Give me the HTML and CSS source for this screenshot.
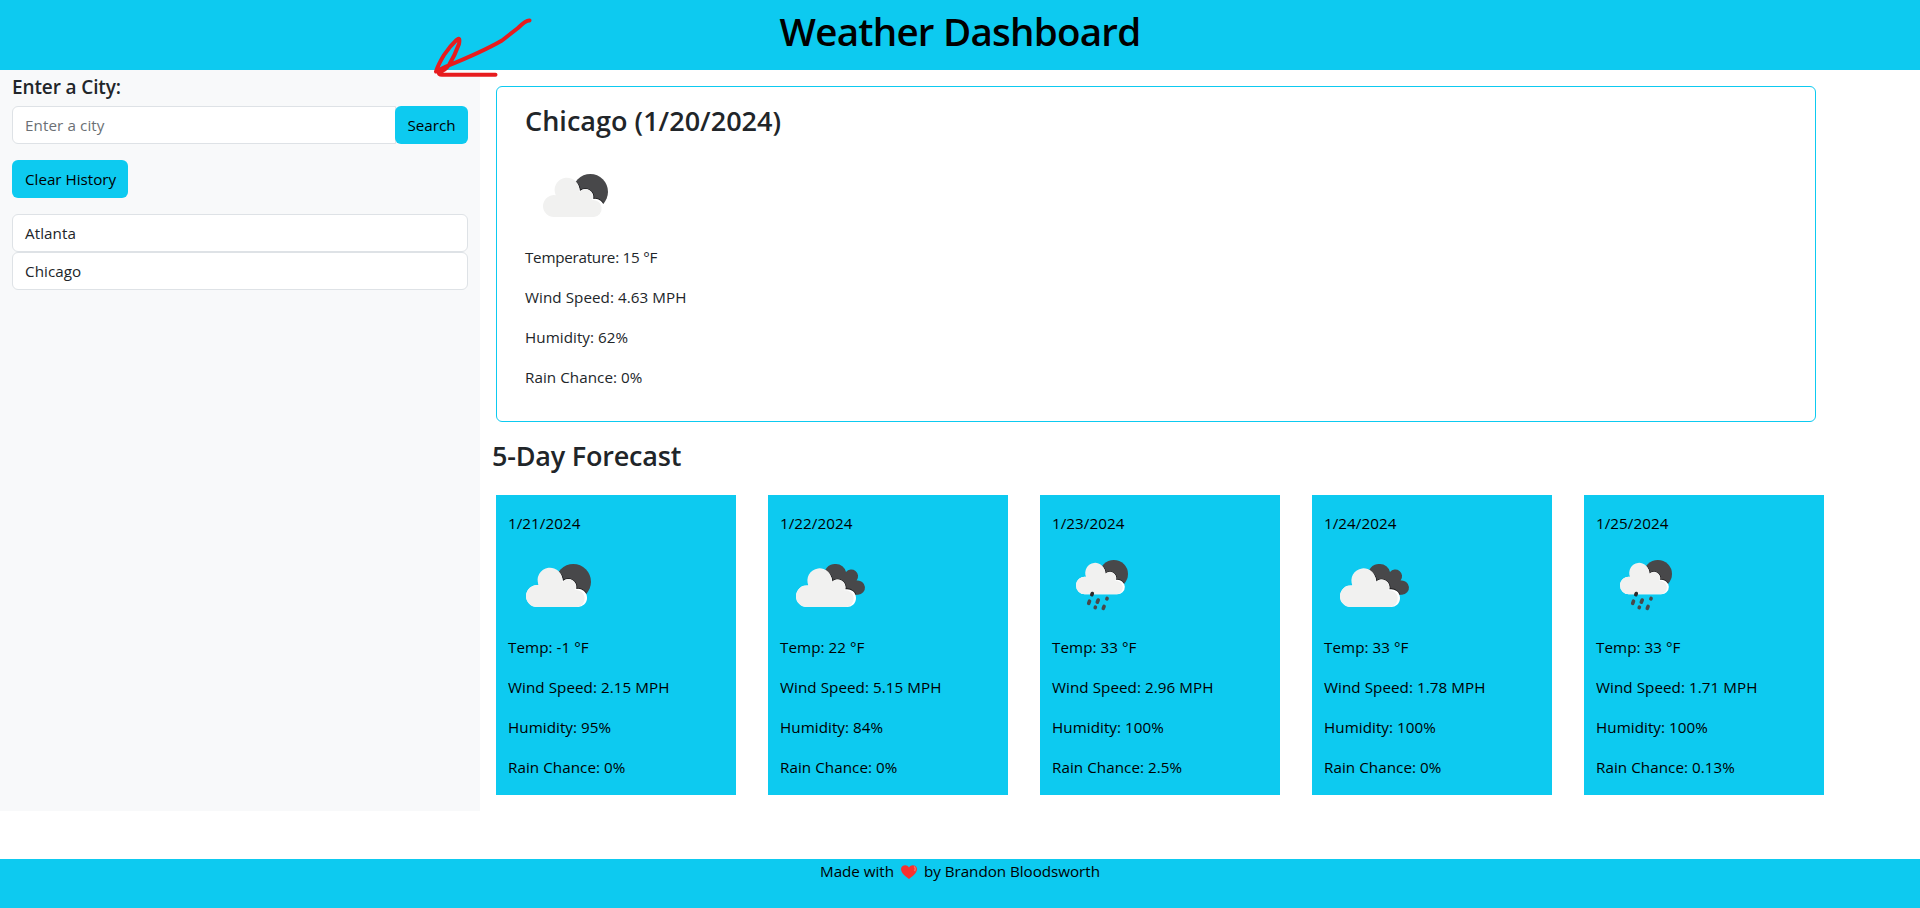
FILE: index.html
```html
<!DOCTYPE html>
<html lang="en">
<head>
<meta charset="utf-8">
<title>Weather Dashboard</title>
<link rel="stylesheet" href="styles.css">
</head>
<body>
<svg class="defs" aria-hidden="true">
  <defs>
    <path id="cloud" d="M29 71a11 11 0 0 1-11-11 11 11 0 0 1 12.7-10.8A12.4 12.4 0 1 1 55 45a8.3 8.3 0 0 1 13.3 8A9.1 9.1 0 1 1 69 71Z"/>
    <path id="cloud-face" d="M29 71a11 11 0 0 1-11-11 11 11 0 0 1 12.7-10.8A12.4 12.4 0 1 1 54.200 46.200a7.600 7.600 0 0 1 13 7.800A8.500 8.500 0 1 1 69 71Z"/>
    <clipPath id="sun-clip"><circle cx="65.3" cy="45.7" r="17.7"/></clipPath>
    <path id="back-cloud" d="M56 28a10.4 10.4 0 0 1 10 8.1A6.2 6.2 0 0 1 76.600 44.500A7.200 7.200 0 1 1 78 58.800H62L45 42A10.400 10.400 0 0 1 56 28Z"/>
    <clipPath id="back-clip"><use href="#back-cloud"/></clipPath>
    <symbol id="partly" viewBox="0 0 100 100">
      <circle cx="65.3" cy="45.7" r="17.7" fill="#48484a"/>
      <use href="#cloud" fill="none" stroke="#1c1c1e" stroke-width="1.6" clip-path="url(#sun-clip)"/>
      <use href="#cloud" fill="#fff"/>
      <use href="#cloud-face" fill="#f1f1f0"/>
    </symbol>
    <symbol id="cloudy" viewBox="0 0 100 100">
      <use href="#back-cloud" fill="#48484a"/>
      <g clip-path="url(#back-clip)"><use href="#cloud" transform="translate(-1.7 1.2) scale(.983)" fill="none" stroke="#1c1c1e" stroke-width="1.6"/></g>
      <g transform="translate(-1.7 1.2) scale(.983)">
        <use href="#cloud" fill="#fff"/>
        <use href="#cloud-face" fill="#f1f1f0"/>
      </g>
    </symbol>
    <symbol id="rain" viewBox="0 0 100 100">
      <use href="#partly" width="100" height="100" transform="translate(9.6 1.5) scale(.8)"/>
      <g stroke="#48484a" stroke-width="3.6" stroke-linecap="round">
        <path d="M40.300 57.500l-.5 1.200" stroke="#2a2a2c"/>
        <path d="M37.500 65.200l-.8 2.200M46.200 64l-.9 2.200M55.100 62.400l-.2.500M43.400 71.100l-.2.500M52.100 70.300l-.8 2"/>
      </g>
    </symbol>
  </defs>
</svg>
<header class="header"><h1 class="title">Weather Dashboard</h1></header>
<div class="main">
  <aside class="sidebar">
    <h2 class="label">Enter a City:</h2>
    <div class="search"><input class="input" type="text" placeholder="Enter a city"><button class="btn">Search</button></div>
    <button class="btn clear">Clear History</button>
    <ul class="history"><li>Atlanta</li><li>Chicago</li></ul>
  </aside>
  <main class="content">
    <section class="today">
      <h3 class="heading">Chicago (1/20/2024)</h3>
      <svg class="icon"><use href="#partly"/></svg>
      <p class="temperature">Temperature: 15 °F</p><p>Wind Speed: 4.63 MPH</p><p>Humidity: 62%</p><p>Rain Chance: 0%</p>
    </section>
    <h3 class="heading forecast-title">5-Day Forecast</h3>
    <section class="forecast">
      <article class="day"><p>1/21/2024</p><svg class="icon"><use href="#partly"/></svg><p>Temp: -1 °F</p><p>Wind Speed: 2.15 MPH</p><p>Humidity: 95%</p><p>Rain Chance: 0%</p></article>
      <article class="day"><p>1/22/2024</p><svg class="icon"><use href="#cloudy"/></svg><p>Temp: 22 °F</p><p>Wind Speed: 5.15 MPH</p><p>Humidity: 84%</p><p>Rain Chance: 0%</p></article>
      <article class="day"><p>1/23/2024</p><svg class="icon"><use href="#rain"/></svg><p>Temp: 33 °F</p><p>Wind Speed: 2.96 MPH</p><p>Humidity: 100%</p><p>Rain Chance: 2.5%</p></article>
      <article class="day"><p>1/24/2024</p><svg class="icon"><use href="#cloudy"/></svg><p>Temp: 33 °F</p><p>Wind Speed: 1.78 MPH</p><p>Humidity: 100%</p><p>Rain Chance: 0%</p></article>
      <article class="day"><p>1/25/2024</p><svg class="icon"><use href="#rain"/></svg><p>Temp: 33 °F</p><p>Wind Speed: 1.71 MPH</p><p>Humidity: 100%</p><p>Rain Chance: 0.13%</p></article>
    </section>
  </main>
</div>
<footer class="footer"><span>Made with</span><svg class="heart" viewBox="0 0 16 14"><path d="M8 14C5 11.500 0 8.500 0 4 0 0 6-1.500 8 2.500 10-1.500 16 0 16 4c0 4.500-5 7.500-8 10Z" fill="#f8312f"/><path d="M13 1.500c1.500 1 1.500 3 .5 4.500" stroke="#f37366" stroke-width="1.500" fill="none"/></svg><span>by Brandon Bloodsworth</span></footer>
<svg class="arrow" viewBox="0 0 110 70"><path d="M99.500 10.500Q96 10 88 18L72 30.500Q52 42 16 56.500L6 61.500Q8 55 14 45Q20 36 26.500 30Q30.500 26 29 34Q25 45 19 55Q15 61 9 62Q8 64.700 12 64.700H65.500" fill="none" stroke="#e71c1e" stroke-width="4" stroke-linecap="round" stroke-linejoin="round"/></svg>
</body>
</html>
```
FILE: styles.css
```css
* { box-sizing: border-box; }
body {
  margin: 0;
  height: 908px;
  display: flex;
  flex-direction: column;
  font: 15.2px/24px "Open Sans", "Noto Sans", sans-serif;
  letter-spacing: .06px;
  color: #212529;
  background: #fff;
}
h1, h2, h3, p, ul { margin: 0; padding: 0; }
.defs { position: absolute; width: 0; height: 0; }
.header { height: 70px; padding-top: 7px; background: #0dcaf0; color: #000; text-align: center; }
.title { font-size: 38.5px; line-height: 48px; font-weight: 600; letter-spacing: -.75px; }
.main { display: flex; height: 741px; }
.sidebar { width: 480px; padding: 5px 12px; background: #f8f9fa; }
.label { font-size: 19px; line-height: 24px; font-weight: 600; letter-spacing: -.12px; margin-bottom: 7px; }
.search { display: flex; margin-bottom: 16px; }
.input {
  flex: 1;
  height: 38px;
  padding: 6px 12px;
  border: 1px solid #dee2e6;
  border-radius: 6px 0 0 6px;
  background: #fff;
  font: inherit;
  letter-spacing: .1px;
}
.input::placeholder { color: #6b7075; opacity: 1; }
.btn {
  height: 38px;
  padding: 6px 12px;
  border: 0;
  border-radius: 6px;
  background: #0dcaf0;
  color: #000;
  font: inherit;
  white-space: nowrap;
}
.search .btn { width: 73px; margin-left: -1px; }
.clear { display: block; width: 116px; padding-left: 13px; }
.history { margin-top: 16px; list-style: none; }
.history li { height: 38px; padding: 6px 12px; border: 1px solid #dee2e6; border-radius: 6px; background: #fff; }
.content { flex: 1; padding: 16px 0 0 16px; }
.today { width: 1320px; height: 336px; padding: 17px 28px; border: 1px solid #0dcaf0; border-radius: 6px; }
.heading { font-size: 27px; line-height: 34px; font-weight: 600; letter-spacing: .03px; }
.icon { display: block; width: 100px; height: 100px; }
.today .icon { margin: 8px 0 -1px; }
.today p, .day p { margin-bottom: 16px; }
.today .temperature { letter-spacing: -.25px; }
.forecast-title { margin: 17px 0 22px -4px; letter-spacing: -.2px; }
.forecast { display: flex; gap: 32px; }
.day { width: 240px; height: 300px; padding: 16px 12px; background: #0dcaf0; color: #000; }
.day .icon { margin: -15px 0 -1px; }
.footer { height: 49px; margin-top: 48px; background: #0dcaf0; color: #000; display: flex; justify-content: center; letter-spacing: -.03px; }
.heart { width: 16px; height: 14px; margin: 6px 7px 0; }
.arrow { position: absolute; left: 430px; top: 10px; width: 110px; height: 70px; }
```
